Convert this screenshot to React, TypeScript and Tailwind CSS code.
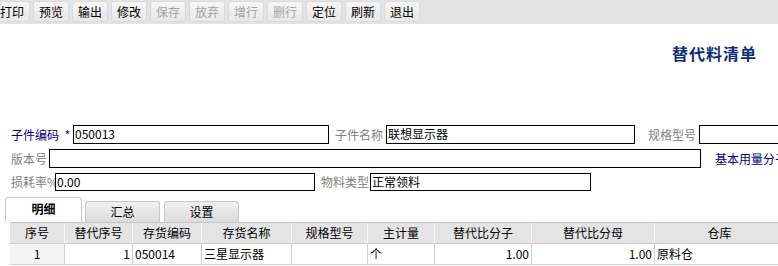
const tools = [
  { t: '打印', on: true },
  { t: '预览', on: true },
  { t: '输出', on: true },
  { t: '修改', on: true },
  { t: '保存', on: false },
  { t: '放弃', on: false },
  { t: '增行', on: false },
  { t: '删行', on: false },
  { t: '定位', on: true },
  { t: '刷新', on: true },
  { t: '退出', on: true },
];

const cols = [
  { h: '序号', w: 55, v: '1', a: 'center' },
  { h: '替代序号', w: 68, v: '1', a: 'right' },
  { h: '存货编码', w: 69, v: '050014', a: 'left' },
  { h: '存货名称', w: 90, v: '三星显示器', a: 'left' },
  { h: '规格型号', w: 76, v: '', a: 'left' },
  { h: '主计量', w: 67, v: '个', a: 'left' },
  { h: '替代比分子', w: 97, v: '1.00', a: 'right' },
  { h: '替代比分母', w: 123, v: '1.00', a: 'right' },
  { h: '仓库', w: 130, v: '原料仓', a: 'left' },
];

function Field({ w, h = 19, value = '' }: { w: number; h?: number; value?: string }) {
  return (
    <div
      className="border border-black bg-white px-[1px] text-[12px] leading-[16px] text-black whitespace-nowrap overflow-hidden shrink-0"
      style={{ width: w, height: h }}
    >
      {value}
    </div>
  );
}

export default function App() {
  return (
    <div className="w-[778px] h-[266px] overflow-hidden bg-white font-['Noto_Sans_CJK_SC',sans-serif] text-[12px] text-black">
      {/* toolbar */}
      <div className="h-[24px] bg-[#e3e3e3] flex items-start pt-[1px] -ml-[6px]">
        {tools.map((b) => (
          <div
            key={b.t}
            className={`w-[36px] h-[21px] mr-[3px] shrink-0 rounded-[3px] border border-[#dadada] bg-gradient-to-b from-[#f6f6f6] to-[#e8e8e8] flex items-center justify-center leading-none ${
              b.on ? 'text-black' : 'text-[#a3a3a3]'
            }`}
          >
            {b.t}
          </div>
        ))}
      </div>

      {/* title */}
      <div className="h-[101px] pt-[19px] pl-[672px]">
        <div className="text-[16px] font-bold leading-[20px] text-[#0e2c7a] tracking-[1px] whitespace-nowrap">
          替代料清单
        </div>
      </div>

      {/* form */}
      <div className="flex flex-col gap-[5px] whitespace-nowrap">
        <div className="flex items-center h-[19px] pl-[11px]">
          <span className="text-[#000080] w-[62px] shrink-0">子件编码 <span className="pl-[3px]">*</span></span>
          <Field w={256} value="050013" />
          <span className="text-[#808080] ml-[6px] w-[51px] shrink-0">子件名称</span>
          <Field w={249} value="联想显示器" />
          <span className="text-[#808080] ml-[13px] w-[51px] shrink-0">规格型号</span>
          <Field w={100} />
        </div>
        <div className="flex items-center h-[19px] pl-[11px]">
          <span className="text-[#808080] w-[38px] shrink-0">版本号</span>
          <Field w={652} />
          <span className="text-[#000080] ml-[14px] shrink-0">基本用量分子</span>
        </div>
        <div className="flex items-center h-[18px] pl-[11px]">
          <span className="text-[#808080] w-[44px] shrink-0">损耗率%</span>
          <Field w={260} h={18} value="0.00" />
          <span className="text-[#808080] ml-[6px] w-[49px] shrink-0">物料类型</span>
          <Field w={221} h={18} value="正常领料" />
        </div>
      </div>

      {/* tabs */}
      <div className="flex items-end h-[25px] mt-[6px] pl-[5px]">
        <div className="w-[77px] h-[25px] rounded-t-[4px] border border-b-0 border-[#c6c6c6] bg-white flex items-center justify-center font-bold pb-[3px]">
          明细
        </div>
        <div className="w-[75px] h-[21px] ml-[3px] rounded-t-[3px] border border-b-0 border-[#c6c6c6] bg-gradient-to-b from-[#f0f0f0] to-[#dcdcdc] flex items-center justify-center">
          汇总
        </div>
        <div className="w-[75px] h-[21px] ml-[4px] rounded-t-[3px] border border-b-0 border-[#c6c6c6] bg-gradient-to-b from-[#f0f0f0] to-[#dcdcdc] flex items-center justify-center">
          设置
        </div>
      </div>

      {/* grid */}
      <div className="ml-[10px] border-t border-[#c4c4c4]">
        <div className="flex h-[21px] bg-[#e4e4e4] border-b border-[#cfcfcf]">
          {cols.map((c) => (
            <div
              key={c.h}
              className="shrink-0 border-r border-[#f8f8f8] flex items-center justify-center"
              style={{ width: c.w }}
            >
              {c.h}
            </div>
          ))}
        </div>
        <div className="flex h-[21px] bg-white border-b border-[#d0d0d0]">
          {cols.map((c, i) => (
            <div
              key={c.h}
              className={`shrink-0 border-r border-[#d0d0d0] flex items-center px-[2px] ${
                c.a === 'center' ? 'justify-center' : c.a === 'right' ? 'justify-end' : 'justify-start'
              } ${i === 0 ? 'bg-[#f4f4f4]' : ''}`}
              style={{ width: c.w }}
            >
              {c.v}
            </div>
          ))}
        </div>
      </div>
    </div>
  );
}
